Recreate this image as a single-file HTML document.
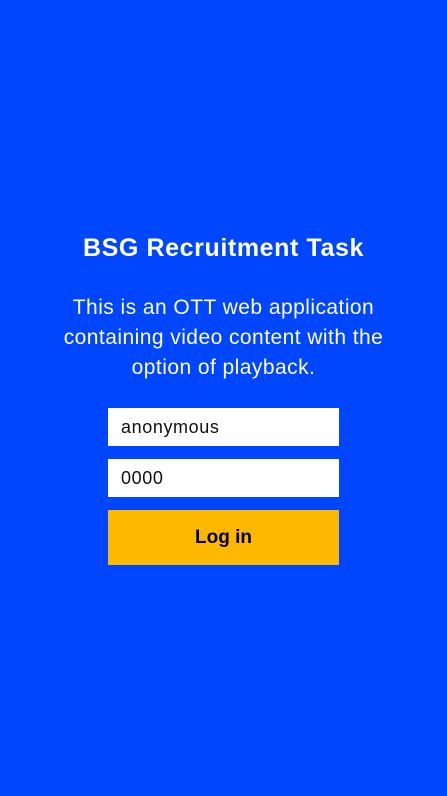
<!DOCTYPE html>
<html><head><style>
html,body{margin:0;padding:0;width:447px;height:796px;background:#0046ff;overflow:hidden;font-family:"Liberation Sans",sans-serif;}
h1{position:absolute;top:232px;left:0;width:447px;margin:0;text-align:center;color:#fff;font-size:25px;font-weight:bold;line-height:32px;letter-spacing:0.6px;}
p{position:absolute;top:293px;left:0;width:447px;margin:0;text-align:center;color:#fff;font-size:21px;line-height:30px;letter-spacing:0.45px;}
.in{position:absolute;left:108px;width:231px;height:38px;background:#fff;box-sizing:border-box;padding-left:13px;font-size:18px;line-height:38px;color:#111;letter-spacing:0.6px;}
.btn{position:absolute;left:108px;top:510px;width:231px;height:55px;background:#ffb800;text-align:center;line-height:55px;font-size:19px;font-weight:bold;color:#000;}
</style></head><body>
<h1>BSG Recruitment Task</h1>
<p>This is an OTT web application<br>containing video content with the<br>option of playback.</p>
<div class="in" style="top:408px">anonymous</div>
<div class="in" style="top:459px">0000</div>
<div class="btn">Log in</div>
</body></html>
